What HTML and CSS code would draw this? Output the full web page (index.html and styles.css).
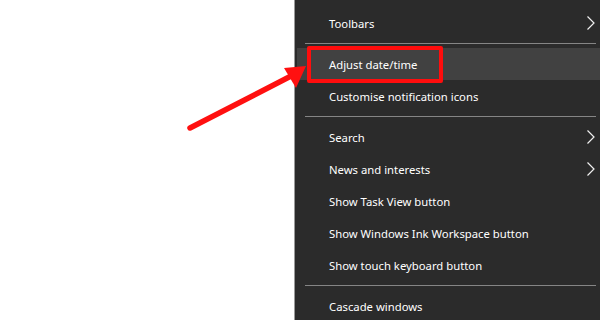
FILE: index.html
```html
<!DOCTYPE html>
<html>
<head>
<meta charset="utf-8">
<link rel="stylesheet" href="styles.css">
</head>
<body>
<div class="screen">
  <div class="blank"></div>
  <div class="menu">
    <div class="item sub">Toolbars<svg class="chev" width="10" height="16" viewBox="0 0 10 16"><polyline points="1.5,1.5 8,8 1.5,14.5" /></svg></div>
    <div class="sep"></div>
    <div class="item hot">Adjust date/time</div>
    <div class="item">Customise notification icons</div>
    <div class="sep"></div>
    <div class="item sub">Search<svg class="chev" width="10" height="16" viewBox="0 0 10 16"><polyline points="1.5,1.5 8,8 1.5,14.5" /></svg></div>
    <div class="item sub">News and interests<svg class="chev" width="10" height="16" viewBox="0 0 10 16"><polyline points="1.5,1.5 8,8 1.5,14.5" /></svg></div>
    <div class="item">Show Task View button</div>
    <div class="item">Show Windows Ink Workspace button</div>
    <div class="item">Show touch keyboard button</div>
    <div class="sep"></div>
    <div class="item">Cascade windows</div>
  </div>
  <div class="redbox"></div>
  <svg class="arrow" width="600" height="320" viewBox="0 0 600 320">
    <line x1="190" y1="128" x2="293" y2="75" />
    <polygon points="306,66 284,68 296,88" />
  </svg>
</div>
</body>
</html>
```
FILE: styles.css
```css
html, body {
  margin: 0;
  padding: 0;
  background: #ffffff;
}
.screen {
  position: relative;
  width: 600px;
  height: 320px;
  overflow: hidden;
  display: flex;
  font-family: "Noto Sans", "Open Sans", sans-serif;
}
.blank {
  width: 294px;
  flex: none;
  background: #ffffff;
}
.menu {
  flex: 1;
  background: #2b2b2b;
  border-left: 1px solid #9a9a9a;
  padding: 7px 0 0 2px;
  display: flex;
  flex-direction: column;
}
.item {
  height: 32px;
  flex: none;
  display: flex;
  align-items: center;
  padding-left: 32px;
  padding-right: 3px;
  color: #ffffff;
  font-size: 11.3px;
  position: relative;
}
.item.hot {
  background: #414141;
}
.chev {
  position: absolute;
  right: 4px;
  top: 8px;
}
.chev polyline {
  fill: none;
  stroke: #f0f0f0;
  stroke-width: 1.2;
}
.sep {
  height: 1px;
  flex: none;
  margin: 4px 4px 4px 8px;
  background: #858585;
}
.redbox {
  position: absolute;
  left: 307px;
  top: 46px;
  width: 136px;
  height: 37px;
  box-sizing: border-box;
  border: 4px solid #ff0d0d;
  border-radius: 2px;
}
.arrow {
  position: absolute;
  left: 0;
  top: 0;
}
.arrow line {
  stroke: #ff1010;
  stroke-width: 5.5;
  stroke-linecap: round;
}
.arrow polygon {
  fill: #ff1010;
}
```
